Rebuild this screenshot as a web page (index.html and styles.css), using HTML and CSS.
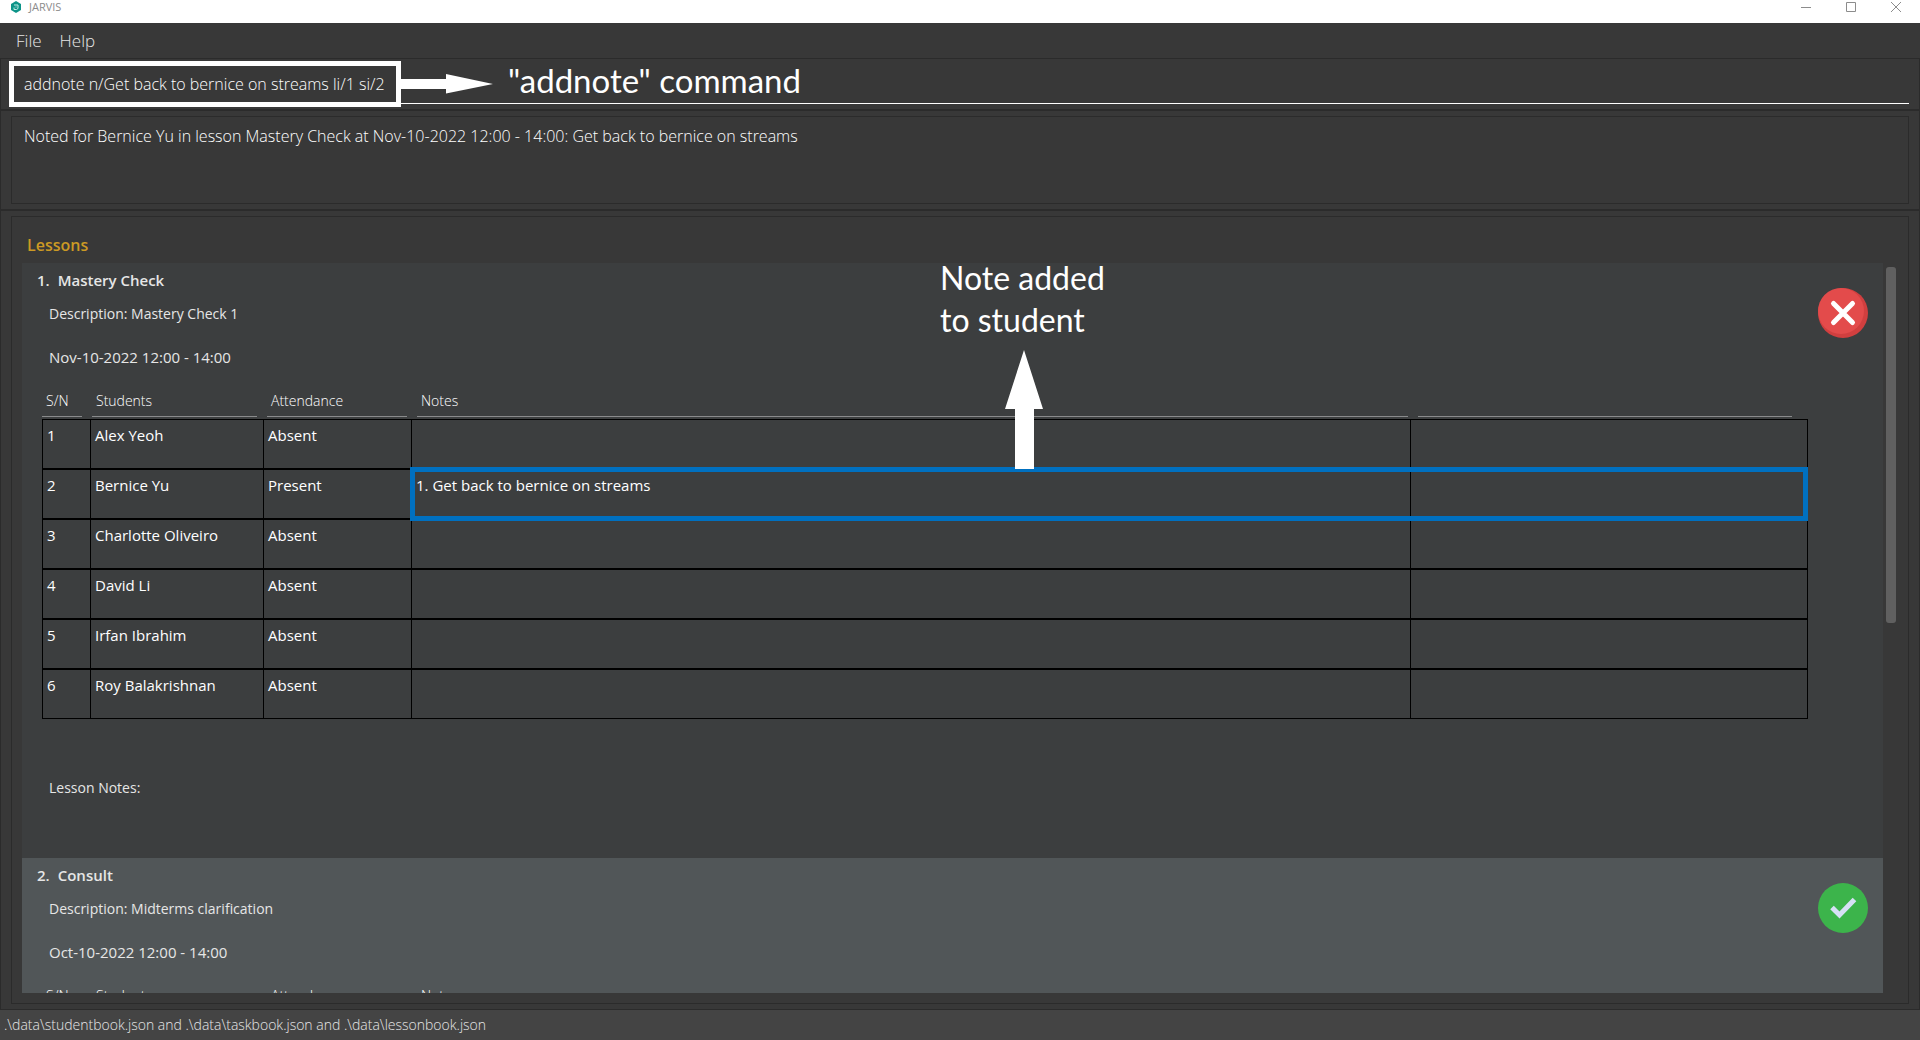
FILE: index.html
```html
<!DOCTYPE html>
<html lang="en">
<head>
<meta charset="utf-8">
<title>JARVIS</title>
<link rel="stylesheet" href="styles.css">
</head>
<body>
<header class="titlebar">
  <svg class="app-icon" width="12" height="12" viewBox="0 0 12 12" aria-hidden="true">
    <path d="M6 0 11 3v6L6 12 1 9V3z" fill="#0d9488"/>
    <path d="M4 4h4v3.500L6.500 8.500H4V6.500M5.500 6h1" fill="none" stroke="#c3ece6" stroke-width="1"/>
  </svg>
  <span class="app-name">JARVIS</span>
  <div class="window-buttons">
    <button type="button" aria-label="Minimize"><svg width="10" height="10"><path d="M0 5.500h10" stroke="#8c8c8c"/></svg></button>
    <button type="button" aria-label="Maximize"><svg width="10" height="10"><path d="M.5.5h9v9h-9z" fill="none" stroke="#8c8c8c"/></svg></button>
    <button type="button" aria-label="Close"><svg width="10" height="10"><path d="M0 0l10 10M10 0 0 10" stroke="#8c8c8c"/></svg></button>
  </div>
</header>

<nav class="menubar">
  <button type="button">File</button>
  <button type="button">Help</button>
</nav>

<section class="pane command-pane">
  <input class="command" type="text" aria-label="Command" value="addnote n/Get back to bernice on streams li/1 si/2">
  <div class="callout command-callout">
    <span class="command-frame"></span>
    <svg width="92" height="20" viewBox="0 0 92 20" aria-hidden="true"><path d="M0 5h45V0l47 10-47 9.500V15H0z" fill="#fff"/></svg>
    <span class="callout-text">"addnote" command</span>
  </div>
</section>

<section class="pane result-pane">
  <output class="result">Noted for Bernice Yu in lesson Mastery Check at Nov-10-2022 12:00 - 14:00: Get back to bernice on streams</output>
</section>

<main class="pane list-pane">
  <div class="list-box">
    <h1>Lessons</h1>
    <div class="list-row">
      <div class="lessons">
        <article class="card">
          <h2><span>1.</span><span>Mastery Check</span></h2>
          <p>Description: Mastery Check 1</p>
          <p class="date">Nov-10-2022 12:00 - 14:00</p>
          <div class="table-wrap">
            <table>
              <colgroup><col class="col-sn"><col class="col-student"><col class="col-attendance"><col><col class="col-extra"></colgroup>
              <thead><tr><th><span>S/N</span></th><th><span>Students</span></th><th><span>Attendance</span></th><th><span>Notes</span></th><th><span></span></th></tr></thead>
              <tbody>
                <tr><td>1</td><td>Alex Yeoh</td><td>Absent</td><td></td><td></td></tr>
                <tr><td>2</td><td>Bernice Yu</td><td>Present</td><td>1. Get back to bernice on streams</td><td></td></tr>
                <tr><td>3</td><td>Charlotte Oliveiro</td><td>Absent</td><td></td><td></td></tr>
                <tr><td>4</td><td>David Li</td><td>Absent</td><td></td><td></td></tr>
                <tr><td>5</td><td>Irfan Ibrahim</td><td>Absent</td><td></td><td></td></tr>
                <tr><td>6</td><td>Roy Balakrishnan</td><td>Absent</td><td></td><td></td></tr>
              </tbody>
            </table>
            <div class="note-frame"></div>
          </div>
          <p class="lesson-notes">Lesson Notes:</p>
          <svg class="status" width="50" height="50" viewBox="0 0 50 50" role="img" aria-label="Not completed">
            <circle cx="25" cy="25" r="25" fill="#d13f3f"/>
            <circle cx="23" cy="23" r="23" fill="#e34b4b"/>
            <path d="M15.500 15.500l19 19M34.500 15.500l-19 19" stroke="#fff" stroke-width="5" stroke-linecap="round"/>
          </svg>
          <div class="callout note-callout">
            <span class="callout-text">Note added<br>to student</span>
            <svg width="38" height="119" viewBox="0 0 38 119" aria-hidden="true"><path d="M19 0 38 59h-9v60H10V59H0z" fill="#fff"/></svg>
          </div>
        </article>
        <article class="card alt">
          <h2><span>2.</span><span>Consult</span></h2>
          <p>Description: Midterms clarification</p>
          <p class="date">Oct-10-2022 12:00 - 14:00</p>
          <div class="table-wrap">
            <table>
              <colgroup><col class="col-sn"><col class="col-student"><col class="col-attendance"><col><col class="col-extra"></colgroup>
              <thead><tr><th><span>S/N</span></th><th><span>Students</span></th><th><span>Attendance</span></th><th><span>Notes</span></th><th><span></span></th></tr></thead>
            </table>
          </div>
          <svg class="status" width="50" height="50" viewBox="0 0 50 50" role="img" aria-label="Completed">
            <circle cx="25" cy="25" r="25" fill="#3cb44b"/>
            <path d="M14 24.500l7.500 7.500L36.500 16.500" fill="none" stroke="#d6e0f5" stroke-width="5"/>
          </svg>
        </article>
      </div>
      <div class="scrollbar"><div class="thumb"></div></div>
    </div>
  </div>
</main>

<footer class="statusbar">.\data\studentbook.json and .\data\taskbook.json and .\data\lessonbook.json</footer>
</body>
</html>
```

FILE: styles.css
```css
* { box-sizing: border-box; }

body {
  margin: 0;
  height: 100vh;
  display: flex;
  flex-direction: column;
  overflow: hidden;
  background: #383838;
  color: #e6e6e6;
  font: 15px/20px "Open Sans", "Noto Sans", sans-serif;
}

button {
  border: 0;
  padding: 0;
  background: none;
  color: inherit;
  font: inherit;
}

h1, h2, p { margin: 0; }

.titlebar {
  flex: none;
  height: 23px;
  padding: 0 19px 9px 10px;
  display: flex;
  align-items: center;
  gap: 7px;
  background: #fff;
  color: #8c8c8c;
  font-size: 11px;
}

.window-buttons { margin-left: auto; display: flex; gap: 35px; }
.window-buttons button { display: flex; }

.menubar {
  flex: none;
  height: 35px;
  padding-left: 16px;
  display: flex;
  align-items: center;
  gap: 18px;
  font-size: 17px;
  font-weight: 300;
}

.pane {
  flex: none;
  border: 1px solid #2b2b2b;
  padding: 5px 10px;
}

.command-pane { position: relative; height: 52px; }

.command {
  display: block;
  width: 100%;
  height: 40px;
  border: 0;
  border-bottom: 1px solid #fff;
  outline: 0;
  padding: 0 13px;
  background: none;
  color: #fff;
  font: 300 16px/20px "Open Sans", "Noto Sans", sans-serif;
}

/* Callouts lie over the application window */
.callout { position: absolute; pointer-events: none; color: #fff; }
.callout-text { font: 32px/42px Lato, "Open Sans", sans-serif; white-space: nowrap; }

.command-callout { top: 2px; left: 8px; display: flex; align-items: center; }
.command-frame { width: 392px; height: 46px; border: 5px solid #fff; }
.command-callout .callout-text { padding: 0 0 8px 15px; font-size: 33px; line-height: 38px; }

.note-callout { top: -6px; left: 918px; display: flex; flex-direction: column; }
.note-callout svg { margin: 9px 0 0 65px; }

.result-pane { height: 100px; }

.result {
  display: block;
  height: 88px;
  border: 1px solid #2b2b2b;
  padding: 9px 12px;
  color: #fff;
  font-size: 16px;
  font-weight: 300;
}

.list-pane { flex: 1; min-height: 0; display: flex; }

.list-box {
  flex: 1;
  min-width: 0;
  border: 1px solid #2b2b2b;
  padding: 18px 10px 10px;
  display: flex;
  flex-direction: column;
}

h1 {
  padding: 0 5px 8px;
  color: #cc9a24;
  font-size: 16px;
  line-height: 20px;
  font-weight: 600;
}

.list-row { flex: 1; min-height: 0; display: flex; gap: 3px; }
.lessons { flex: 1; min-width: 0; overflow: hidden; }

.card {
  position: relative;
  height: 595px;
  padding: 7px 75px 0 20px;
  background: #3c3e3f;
}

.card.alt { background: #515658; }

h2 {
  display: flex;
  gap: 8px;
  margin-left: -5px;
  font-size: 15px;
  line-height: 20px;
  font-weight: 600;
}

.card p { margin: 14px 7px 0; font-size: 14px; }
.card p.date { margin-top: 23px; font-size: 15px; }
.card p.lesson-notes { margin-top: 59px; }

.status { position: absolute; top: 25px; right: 15px; }

.table-wrap { position: relative; margin-top: 24px; }

table {
  width: 100%;
  table-layout: fixed;
  border-spacing: 0;
  color: #fff;
}

.col-sn { width: 48px; }
.col-student { width: 173px; }
.col-attendance { width: 148px; }
.col-extra { width: 398px; }

th {
  height: 28px;
  padding: 0 2px 2px 6px;
  text-align: left;
  vertical-align: top;
  font-size: 14px;
  line-height: 20px;
  font-weight: 300;
}

th span {
  display: block;
  height: 26px;
  padding-left: 4px;
  border-bottom: 1px solid #8a8b8c;
}

th:nth-child(1) { padding: 0 8px 2px 0; }
th:nth-child(2) { padding: 0 6px 2px 2px; }
th:nth-child(3) { padding: 0 4px 2px 4px; }
th:nth-child(5) { padding: 0 16px 2px 8px; }

td {
  height: 50px;
  border: 1px solid #000;
  border-right: 0;
  padding: 5px 4px;
  vertical-align: top;
}

td:last-child { border-right: 1px solid #000; }

.note-frame {
  position: absolute;
  top: 76px;
  left: 368px;
  right: 0;
  height: 54px;
  border: 5px solid #0070c0;
}

.scrollbar { width: 12px; padding-top: 4px; }

.thumb {
  width: 10px;
  height: 49%;
  border-radius: 3px;
  background: #606060;
}

.statusbar {
  flex: none;
  height: 30px;
  padding: 5px 4px;
  background: #444;
  font-size: 14px;
  font-weight: 300;
}
```
